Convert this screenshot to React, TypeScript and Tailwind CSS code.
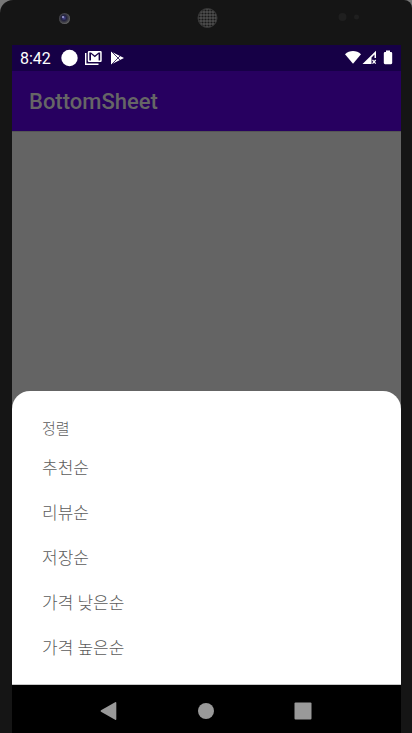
const sortOptions = ["추천순", "리뷰순", "저장순", "가격 낮은순", "가격 높은순"];

function CameraBar() {
  return (
    <div className="flex h-[45px] justify-center overflow-hidden">
      <svg width="412" height="45" viewBox="0 0 412 45" className="shrink-0" aria-hidden="true">
        <defs>
          <pattern id="mesh" width="3" height="3" patternUnits="userSpaceOnUse">
            <rect width="3" height="3" fill="#4e4e4e" />
            <circle cx="1.5" cy="1.5" r="1.1" fill="#181818" />
          </pattern>
          <radialGradient id="lens" cx="0.45" cy="0.45" r="0.6">
            <stop offset="0" stopColor="#4c4a9c" />
            <stop offset="0.4" stopColor="#24233f" />
            <stop offset="0.75" stopColor="#4a4a4c" />
            <stop offset="1" stopColor="#77777b" />
          </radialGradient>
        </defs>
        <circle cx="64.5" cy="18.5" r="5.5" fill="url(#lens)" />
        <circle cx="63" cy="17" r="1" fill="#a9a8d8" />
        <circle cx="207.5" cy="18" r="9.5" fill="url(#mesh)" stroke="#383838" />
        <circle cx="342.5" cy="17" r="4" fill="#1f1f1f" />
        <circle cx="356.5" cy="17" r="2.5" fill="#1f1f1f" />
      </svg>
    </div>
  );
}

function StatusBar() {
  return (
    <div className="flex h-[26px] items-center bg-[#160046] pr-[7px] pl-2 text-white">
      <span className="pt-px text-[16px] leading-[25px]">8:42</span>
      <svg width="64" height="18" viewBox="0 0 64 18" className="ml-[10px]" fill="currentColor" aria-hidden="true">
        <circle cx="8.5" cy="9" r="8.2" />
        {/* mail stack */}
        <path d="M24.7 4V15.300H37.500" fill="none" stroke="currentColor" strokeWidth="1.4" />
        <path
          fillRule="evenodd"
          d="M28 2h11.500q1.200 0 1.200 1.200v8.600q0 1.200-1.200 1.200H28q-1.200 0-1.200-1.200V3.200Q26.800 2 28 2ZM28.300 3.500v8H30V5l3.800 3.300L37.600 5v6.500h1.600v-8h-1.600L33.800 6.500 30 3.500Z"
        />
        {/* play store */}
        <path d="M50 2.600 63 9 50 15.400Z" />
        <path d="M50.500 2.500 59.500 11.500M50.500 15.500 59.500 6.500" stroke="#160046" strokeWidth="0.8" />
      </svg>
      <svg width="50" height="18" viewBox="0 0 50 18" className="ml-auto" fill="currentColor" aria-hidden="true">
        <path d="M1 5.200C5.500.800 12.500.800 17 5.200L9 14.800Z" />
        {/* mobile signal without data */}
        <path fillRule="evenodd" d="M18.500 15 32 1.800V9H30.500V5.500L27.500 8.500V15Z" />
        <path d="m28.500 11 3.200 3.600M31.700 11l-3.200 3.600" stroke="currentColor" strokeWidth="1.2" />
        <path d="M42 1.500h4V3h1q1.200 0 1.200 1.200v9.900q0 1.100-1.200 1.100h-6q-1.200 0-1.200-1.100V4.200Q39.800 3 41 3h1Z" />
      </svg>
    </div>
  );
}

function SortSheet() {
  return (
    <section
      aria-labelledby="sort-title"
      className="rounded-t-[18px] border-b border-[#c8c8c8] bg-white px-[30px] pt-[21px] pb-[13px] text-[#5c5c5c]"
    >
      <h2 id="sort-title" className="text-[15px] leading-[34px] font-light">
        정렬
      </h2>
      <ul>
        {sortOptions.map((option) => (
          <li key={option}>
            <button type="button" className="block w-full text-left text-[17px] leading-[45px] font-light">
              {option}
            </button>
          </li>
        ))}
      </ul>
    </section>
  );
}

function NavigationBar() {
  return (
    <nav className="flex h-12 items-center justify-center gap-[73px] bg-black pt-1 pr-0.5 text-[#999999]">
      <button type="button" aria-label="Back">
        <svg width="24" height="24" viewBox="0 0 24 24" fill="currentColor">
          <path d="M4 11.300 18.100 3.200q1.200-.6 1.200.7v16.200q0 1.300-1.200.7L4 12.700q-1-.7 0-1.400Z" />
        </svg>
      </button>
      <button type="button" aria-label="Home">
        <svg width="24" height="24" viewBox="0 0 24 24" fill="currentColor">
          <circle cx="12" cy="12" r="8" />
        </svg>
      </button>
      <button type="button" aria-label="Recent apps">
        <svg width="24" height="24" viewBox="0 0 24 24" fill="currentColor">
          <rect x="3.500" y="3.500" width="17" height="17" rx="1" />
        </svg>
      </button>
    </nav>
  );
}

export default function App() {
  return (
    <div className="bg-[#777777] font-['Roboto','Noto_Sans_CJK_KR',sans-serif]">
      <div className="flex min-h-screen flex-col rounded-tl-[13px] rounded-tr-lg bg-[#151515]">
        <CameraBar />
        <div className="mr-[11px] ml-3 flex flex-1 flex-col bg-[#646464]">
          <StatusBar />
          <header className="flex h-[60px] items-center bg-[#270060] px-[17px] pt-0.5">
            <h1 className="text-[22px] leading-7 font-medium text-[#666666]">BottomSheet</h1>
          </header>
          <main className="flex flex-1 flex-col justify-end border-t border-[#555555]">
            <SortSheet />
          </main>
          <NavigationBar />
        </div>
      </div>
    </div>
  );
}
